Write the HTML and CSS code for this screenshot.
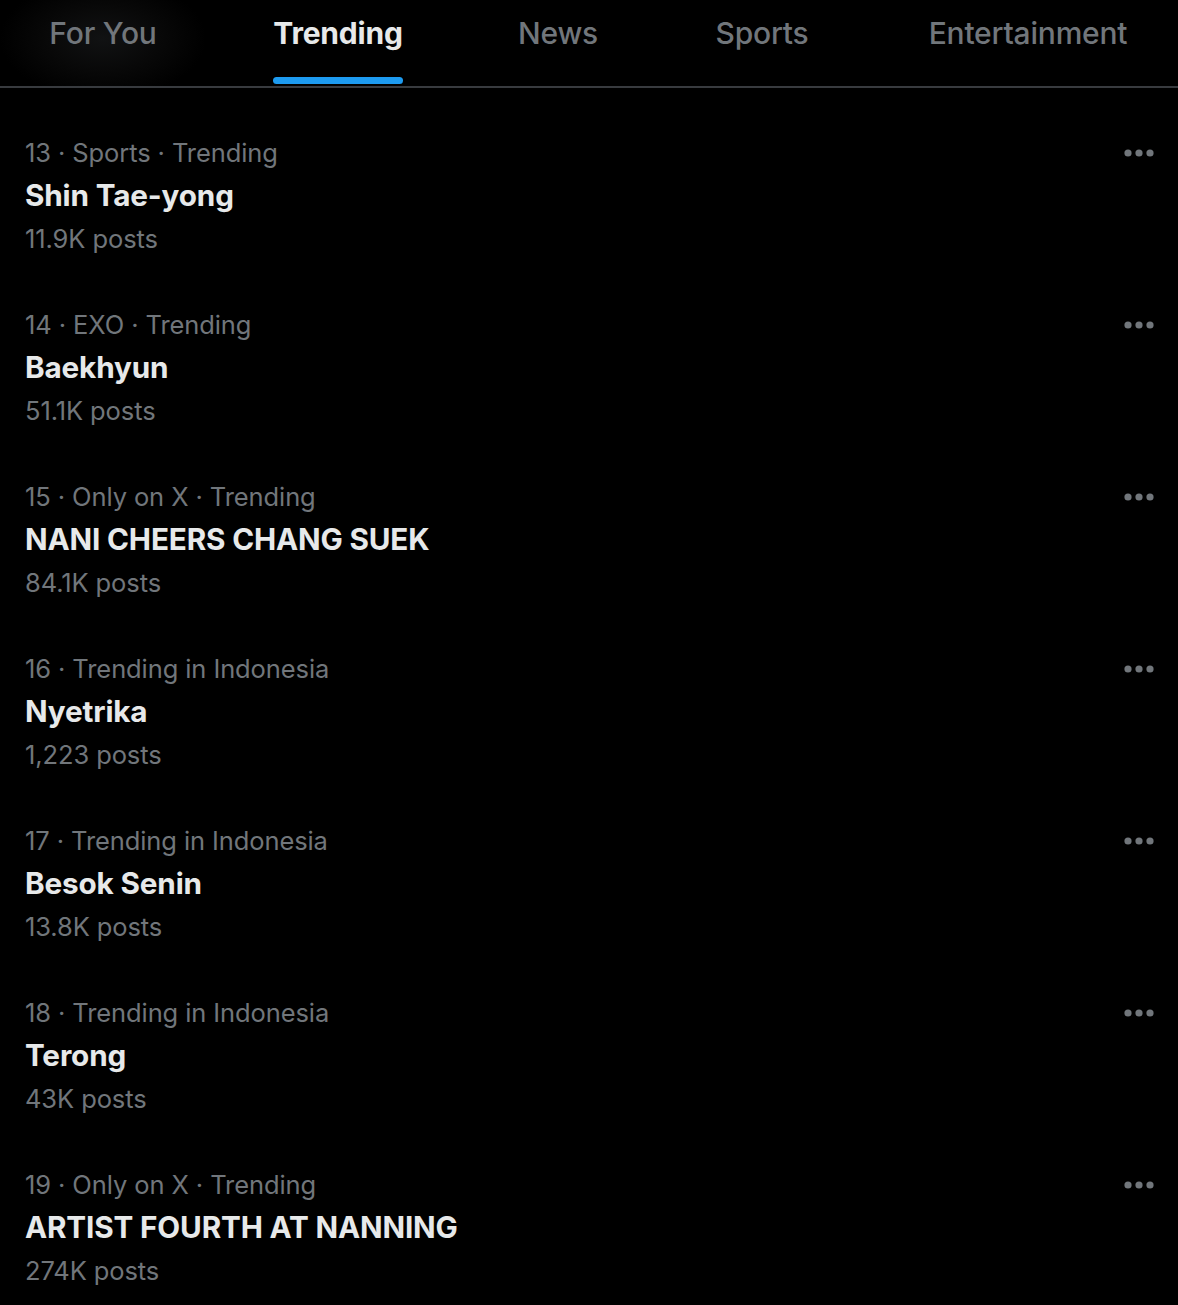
FILE: index.html
```html
<!DOCTYPE html>
<html lang="en">
<head>
    <meta charset="UTF-8">
    <title>Explore | Trending</title>
    <link rel="stylesheet" href="styles.css">
</head>

<body>
    <div class="tabs">
        <a class="tab hovered" href="#"><span>For You</span></a>
        <a class="tab active" href="#"><span>Trending</span></a>
        <a class="tab" href="#"><span>News</span></a>
        <a class="tab" href="#"><span>Sports</span></a>
        <a class="tab" href="#"><span>Entertainment</span></a>
    </div>

    <div class="trends">
        <div class="trend">
            <div class="trend-info">
                <div class="meta">13 · Sports · Trending</div>
                <div class="name">Shin Tae-yong</div>
                <div class="count">11.9K posts</div>
            </div>
            <button class="more"><svg viewBox="0 0 30 8"><circle cx="4" cy="4" r="3.6"/><circle cx="15" cy="4" r="3.6"/><circle cx="26" cy="4" r="3.6"/></svg></button>
        </div>
        <div class="trend">
            <div class="trend-info">
                <div class="meta">14 · EXO · Trending</div>
                <div class="name">Baekhyun</div>
                <div class="count">51.1K posts</div>
            </div>
            <button class="more"><svg viewBox="0 0 30 8"><circle cx="4" cy="4" r="3.6"/><circle cx="15" cy="4" r="3.6"/><circle cx="26" cy="4" r="3.6"/></svg></button>
        </div>
        <div class="trend">
            <div class="trend-info">
                <div class="meta">15 · Only on X · Trending</div>
                <div class="name">NANI CHEERS CHANG SUEK</div>
                <div class="count">84.1K posts</div>
            </div>
            <button class="more"><svg viewBox="0 0 30 8"><circle cx="4" cy="4" r="3.6"/><circle cx="15" cy="4" r="3.6"/><circle cx="26" cy="4" r="3.6"/></svg></button>
        </div>
        <div class="trend">
            <div class="trend-info">
                <div class="meta">16 · Trending in Indonesia</div>
                <div class="name">Nyetrika</div>
                <div class="count">1,223 posts</div>
            </div>
            <button class="more"><svg viewBox="0 0 30 8"><circle cx="4" cy="4" r="3.6"/><circle cx="15" cy="4" r="3.6"/><circle cx="26" cy="4" r="3.6"/></svg></button>
        </div>
        <div class="trend">
            <div class="trend-info">
                <div class="meta">17 · Trending in Indonesia</div>
                <div class="name">Besok Senin</div>
                <div class="count">13.8K posts</div>
            </div>
            <button class="more"><svg viewBox="0 0 30 8"><circle cx="4" cy="4" r="3.6"/><circle cx="15" cy="4" r="3.6"/><circle cx="26" cy="4" r="3.6"/></svg></button>
        </div>
        <div class="trend">
            <div class="trend-info">
                <div class="meta">18 · Trending in Indonesia</div>
                <div class="name">Terong</div>
                <div class="count">43K posts</div>
            </div>
            <button class="more"><svg viewBox="0 0 30 8"><circle cx="4" cy="4" r="3.6"/><circle cx="15" cy="4" r="3.6"/><circle cx="26" cy="4" r="3.6"/></svg></button>
        </div>
        <div class="trend">
            <div class="trend-info">
                <div class="meta">19 · Only on X · Trending</div>
                <div class="name">ARTIST FOURTH AT NANNING</div>
                <div class="count">274K posts</div>
            </div>
            <button class="more"><svg viewBox="0 0 30 8"><circle cx="4" cy="4" r="3.6"/><circle cx="15" cy="4" r="3.6"/><circle cx="26" cy="4" r="3.6"/></svg></button>
        </div>
    </div>
</body>
</html>
```

FILE: styles.css
```css
html, body {
    background-color: #000000;
    color: #e7e9ea;
    font-family: Inter, "Open Sans", sans-serif;
    margin: 0;
    padding: 0;
}

.tabs {
    display: grid;
    grid-template-columns: 206px 264px 176px 232px 300px;
    height: 86px;
    border-bottom: 2px solid #383b3f;
}

.tab {
    display: flex;
    justify-content: center;
    text-decoration: none;
    color: #71767b;
    font-size: 30px;
    font-weight: 500;
    letter-spacing: -0.2px;
}

.tab span {
    display: flex;
    flex-direction: column;
    padding-top: 15px;
    line-height: 36px;
}

.tab.hovered {
    background: radial-gradient(ellipse 50% 70% at 50% 45%, #111213 0%, #080808 55%, #000000 100%);
}

.tab.active {
    color: #e7e9ea;
    font-weight: 700;
}

.tab.active span::after {
    content: "";
    display: block;
    height: 7px;
    margin-top: 26px;
    border-radius: 4px;
    background-color: #1d9bf0;
}

.trends {
    padding-top: 21px;
}

.trend {
    display: flex;
    justify-content: space-between;
    align-items: flex-start;
    padding: 22px 24px 21px 25px;
}

.trend-info .meta,
.trend-info .count {
    color: #71767b;
    font-size: 25.5px;
    line-height: 43px;
    letter-spacing: -0.1px;
}

.trend-info .name {
    color: #e7e9ea;
    font-size: 29.7px;
    font-weight: 700;
    line-height: 43px;
    letter-spacing: -0.15px;
}

.more {
    background: none;
    border: none;
    padding: 0;
    margin-top: 18px;
    cursor: pointer;
}

.more svg {
    display: block;
    width: 30px;
    height: 8px;
    fill: #71767b;
}
```
